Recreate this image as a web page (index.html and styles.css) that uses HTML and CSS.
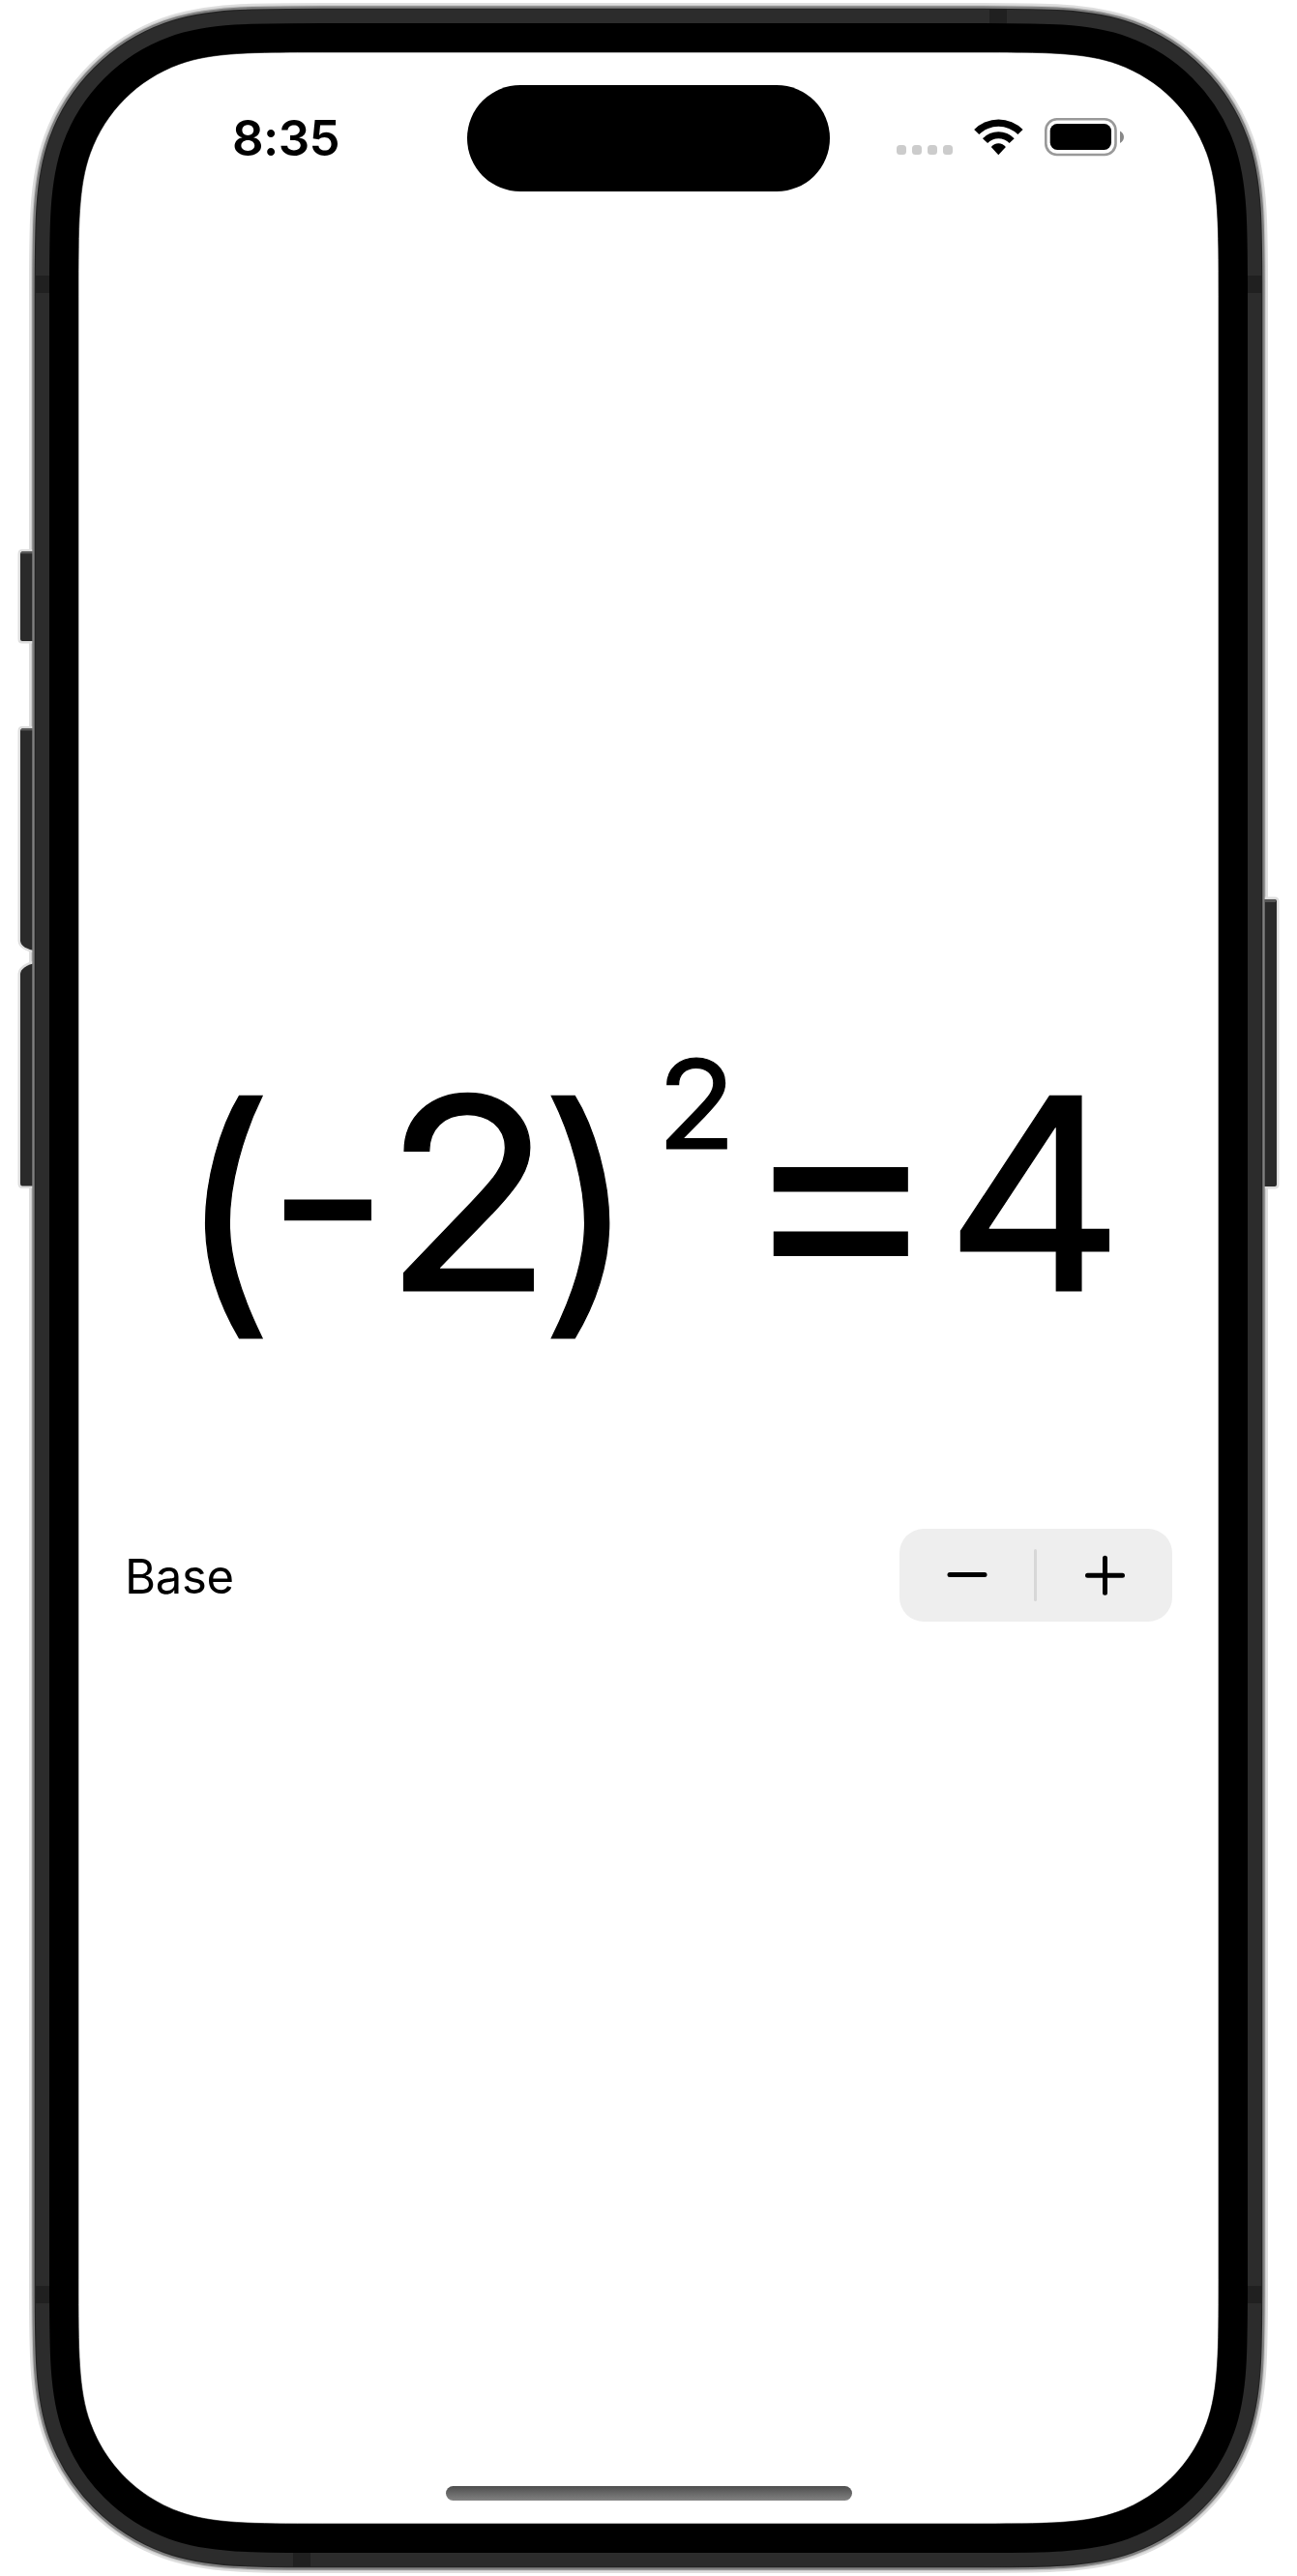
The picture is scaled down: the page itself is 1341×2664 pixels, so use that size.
FILE: index.html
```html
<!DOCTYPE html>
<html lang="en">
<head>
<meta charset="utf-8">
<title>Power calculator</title>
<link rel="stylesheet" href="styles.css">
</head>
<body>
<div class="device">
  <svg class="bezel" viewBox="0 0 1341 2664" aria-hidden="true">
    <defs>
      <path id="screen-shape" d="M333.2 54H1007.8C1080.4 54 1121.900 54 1155.8 66.4C1198.5 81.9 1232.1 115.500 1247.6 158.2C1260 192.100 1260 233.6 1260 306.2V2357.8C1260 2430.4 1260 2471.900 1247.6 2505.8C1232.1 2548.500 1198.5 2582.1 1155.8 2597.6C1121.900 2610 1080.4 2610 1007.8 2610H333.2C260.6 2610 219.100 2610 185.2 2597.6C142.5 2582.1 108.9 2548.5 93.4 2505.8C81 2471.900 81 2430.4 81 2357.8V306.2C81 233.6 81 192.100 93.4 158.2C108.9 115.5 142.5 81.9 185.2 66.4C219.100 54 260.6 54 333.2 54Z"/>
    </defs>
    <!-- metal frame, outer rim -->
    <use href="#screen-shape" fill="none" stroke="#dedede" stroke-width="102"/>
    <use href="#screen-shape" fill="none" stroke="#c6c6c6" stroke-width="97.6"/>
    <!-- side buttons -->
    <g fill="#2a2a2a" stroke="#dfdfdf" stroke-width="5" paint-order="stroke">
      <path d="M38 570.500H23Q21 570.500 21 573V661Q21 663 23 663H38Z"/>
      <path d="M38 753.500H23Q21 753.500 21 756V973Q22 981 38 983.500Z"/>
      <path d="M38 995.500Q22 999 21 1007V1224Q21 1226.500 23 1226.500H38Z"/>
      <path d="M1304 930H1318Q1320 930 1320 932V1225Q1320 1227 1318 1227H1304Z"/>
    </g>
    <path fill="#555" d="M22 570.500H34v2H22zM22 753.500H34v2H22zM1308 930h11v3H1308z"/>
    <!-- metal frame, body -->
    <use href="#screen-shape" fill="none" stroke="#808080" stroke-width="95.400"/>
    <use href="#screen-shape" fill="none" stroke="#232323" stroke-width="90.6"/>
    <use href="#screen-shape" fill="none" stroke="#2c2c2c" stroke-width="88.4"/>
    <!-- antenna bands -->
    <path fill="#202020" d="M37 285h15v18H37zM1289 285h15.500v18H1289zM1023 9.500h18V25h-18zM37 2364h15v18H37zM1289 2364h15.500v18H1289zM303 2639h18v15.500h-18z"/>
    <use href="#screen-shape" fill="none" stroke="#000" stroke-width="60"/>
    <use href="#screen-shape" fill="#fff" stroke="#000" stroke-width="0.600"/>
  </svg>

  <main class="screen">
    <header class="status">
      <span class="time">8:35</span>
      <span class="island"></span>
      <span class="signal"><i></i><i></i><i></i><i></i></span>
      <svg class="wifi" viewBox="1006 122 53 40" width="53" height="40" aria-label="Wi-Fi">
        <path d="M1007.200 134A35.500 35.500 0 0 1 1057.600 134L1052.400 139A28.500 28.500 0 0 0 1012.300 139Z"/>
        <path d="M1016 143.200A22.500 22.500 0 0 1 1048.700 143.200L1043.600 148A15.500 15.500 0 0 0 1021.100 148Z"/>
        <path d="M1024.800 151.900A9.500 9.500 0 0 1 1039.900 151.900L1032.300 160.200Z"/>
      </svg>
      <svg class="battery" viewBox="1079 121 84 41" width="84" height="41" aria-label="Battery">
        <rect x="1081.300" y="123.300" width="72.200" height="36.700" rx="11.500" fill="none" stroke="#999" stroke-width="2.600"/>
        <rect x="1085.700" y="128" width="63.300" height="27" rx="7.500"/>
        <path fill="#888" d="M1158 135.500Q1162 138 1162 141.700T1158 148Z"/>
      </svg>
    </header>

    <section class="equation">
      <span class="paren open">(</span><span class="minus">-</span><span class="base">2</span><span class="paren close">)</span><sup class="exponent">2</sup><span class="equals">=</span><span class="result">4</span>
    </section>

    <section class="control">
      <span class="label">Base</span>
      <div class="stepper">
        <button class="step" aria-label="Decrement"><svg width="42" height="42" viewBox="0 0 42 42"><path d="M3 20.500h36"/></svg></button>
        <span class="divider"></span>
        <button class="step" aria-label="Increment"><svg width="42" height="42" viewBox="0 0 42 42"><path d="M3.500 21.300h36M21.500 3.300v36"/></svg></button>
      </div>
    </section>

    <div class="home"></div>
  </main>
</div>
</body>
</html>
```
FILE: styles.css
```css
* { box-sizing: border-box; }

body {
  margin: 0;
  background: #fff;
  color: #000;
  font-family: Inter, "Liberation Sans", sans-serif;
}

.device {
  display: grid;
  width: 1341px;
  height: 2664px;
  overflow: hidden;
}

.bezel, .screen { grid-area: 1 / 1; }

.bezel {
  display: block;
  width: 1341px;
  height: 2664px;
}

.screen {
  display: flex;
  flex-direction: column;
  width: 1179px;
  height: 2556px;
  margin: 54px 0 0 81px;
}

/* status bar */
.status {
  display: flex;
  align-items: center;
  height: 177px;
  padding-left: 159px;
}

.time {
  width: 243px;
  font-size: 51px;
  font-weight: 600;
  line-height: 1;
  letter-spacing: -0.6px;
}

.island {
  width: 375px;
  height: 110px;
  margin-top: 1px;
  border-radius: 55px;
  background: #000;
}

.signal {
  display: flex;
  gap: 6px;
  margin: 25px 0 0 69px;
}

.signal i {
  width: 10px;
  height: 10px;
  border-radius: 3.5px;
  background: #ccc;
}

.wifi { margin: -1px 0 0 21px; }
.battery { margin: -2px 0 0 20px; }

/* equation: each glyph sits in a cell of its own width */
.equation {
  display: flex;
  align-items: baseline;
  height: 305px;
  margin-top: 841.3px;
  padding-left: 106.8px;
  font-size: 279px;
  line-height: 1;
  -webkit-text-stroke: 1.2px #000;
}

.equation > * {
  flex: none;
  transform-origin: 0 86.36%;
}

.paren { font-size: 276px; }
.open { width: 89px; transform: translate(-5px, 11.4px) scaleX(1.005); }
.close { width: 123px; transform: translate(-1px, 11.4px) scaleX(1.02); }
.minus { width: 122px; font-size: 274px; transform: translate(-2px, -4.5px) scale(1.015, 0.93); }
.base { width: 159px; transform: translateX(-3.2px) scale(1.035, 0.995); }
.exponent { width: 85px; font-size: 128px; line-height: 1; transform: translate(-1.5px, -147px) scaleX(1.04); }
.equals { width: 212.4px; font-size: 305px; -webkit-text-stroke: 0; transform: translate(-1px, 7.5px) scale(1.033, 1.03); }
.result { width: 183px; transform: translateX(-1.5px) scale(1.035, 0.993); }

/* stepper row */
.control {
  display: flex;
  align-items: center;
  justify-content: space-between;
  height: 96px;
  margin-top: 203.7px;
  padding: 0 48px;
}

.label {
  padding-top: 3px;
  font-size: 49px;
  line-height: 1;
  letter-spacing: -0.3px;
}

.stepper {
  display: flex;
  align-items: center;
  width: 282px;
  height: 96px;
  border-radius: 25px;
  background: #eee;
}

.step {
  display: flex;
  flex: 1;
  align-items: center;
  justify-content: center;
  padding: 0;
  border: 0;
  background: none;
}

.step path {
  fill: none;
  stroke: #000;
  stroke-width: 5;
  stroke-linecap: round;
}

.divider {
  width: 3px;
  height: 54px;
  margin: 0 0.5px 0 -0.5px;
  border-radius: 2px;
  background: #d7d7d7;
}

.home {
  width: 420px;
  height: 15px;
  margin: auto auto 24px 380px;
  border-radius: 8px;
  background: linear-gradient(#4e4e4e, #828282);
}
```
